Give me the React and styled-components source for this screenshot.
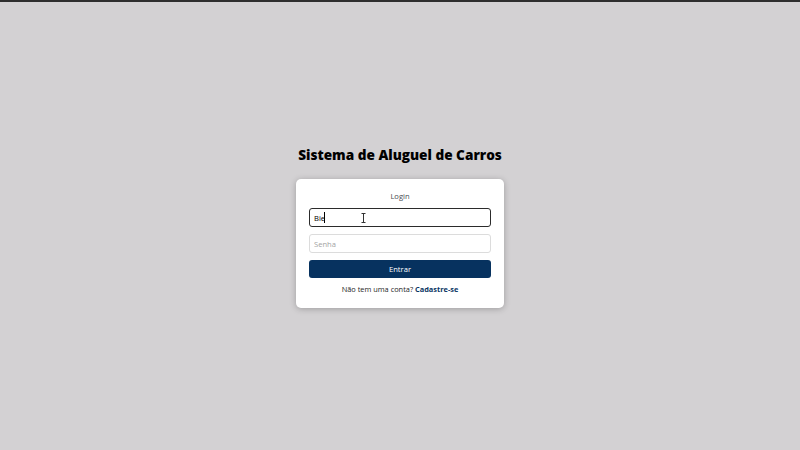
import React from "react";
import styled, { createGlobalStyle } from "styled-components";

const Global = createGlobalStyle`
  html, body { margin: 0; padding: 0; }
  body {
    background: #d3d1d3;
    font-family: "Open Sans", "Noto Sans", sans-serif;
    border-top: 2px solid #2e2e2e;
    box-sizing: border-box;
  }
  * { box-sizing: border-box; }
`;

const Page = styled.main`
  min-height: 448px;
  display: flex;
  flex-direction: column;
  align-items: center;
  justify-content: center;
  padding-top: 2px;
`;

const Title = styled.h1`
  margin: 0 0 15px;
  font-size: 13.6px;
  font-weight: 800;
  color: #000;
  line-height: 18px;
`;

const Card = styled.form`
  width: 208px;
  background: #fff;
  border-radius: 5px;
  box-shadow: 0 1px 6px rgba(0, 0, 0, 0.25);
  padding: 11px 13px 13px;
  display: flex;
  flex-direction: column;
  gap: 7px;
`;

const CardTitle = styled.h2`
  margin: 0 0 -1px;
  font-size: 7.6px;
  font-weight: 400;
  color: #4a4d52;
  text-align: center;
  line-height: 12px;
`;

const Field = styled.div`
  position: relative;
  height: 19px;
`;

const Input = styled.input`
  display: block;
  width: 100%;
  height: 19px;
  padding: 0 4px;
  font-family: inherit;
  font-size: 7.6px;
  color: #000;
  background: #fff;
  border: ${(p) => (p.$focused ? "1.5px solid #2b2b2b" : "1px solid #dcdcdc")};
  border-radius: 3px;
  outline: none;
  &::placeholder { color: #a3a3a3; }
`;

const Caret = styled.span`
  position: absolute;
  left: 15px;
  top: 4px;
  width: 1px;
  height: 11px;
  background: #000;
`;

const IBeam = styled.svg`
  position: absolute;
  left: 52px;
  top: 5px;
`;

const Button = styled.button`
  display: block;
  height: 18px;
  border: none;
  border-radius: 3px;
  background: #07325f;
  color: #fff;
  font-family: inherit;
  font-size: 7.6px;
  cursor: pointer;
`;

const Footer = styled.p`
  margin: -2px 0 0;
  font-size: 7.4px;
  color: #1e1e1e;
  text-align: center;
  line-height: 12px;
`;

const Link = styled.a`
  color: #0a3563;
  font-weight: 700;
  text-decoration: none;
`;

export default function App() {
  return (
    <>
      <Global />
      <Page>
        <Title>Sistema de Aluguel de Carros</Title>
        <Card onSubmit={(e) => e.preventDefault()}>
          <CardTitle>Login</CardTitle>
          <Field>
            <Input $focused defaultValue="Bie" />
            <Caret />
            <IBeam width="5" height="10" viewBox="0 0 5 10">
              <path d="M0.5 0.5h4M2.5 0.5v9M0.5 9.5h4" stroke="#333" strokeWidth="1" fill="none" />
            </IBeam>
          </Field>
          <Field>
            <Input type="password" placeholder="Senha" />
          </Field>
          <Button type="submit">Entrar</Button>
          <Footer>
            Não tem uma conta? <Link href="#">Cadastre-se</Link>
          </Footer>
        </Card>
      </Page>
    </>
  );
}
